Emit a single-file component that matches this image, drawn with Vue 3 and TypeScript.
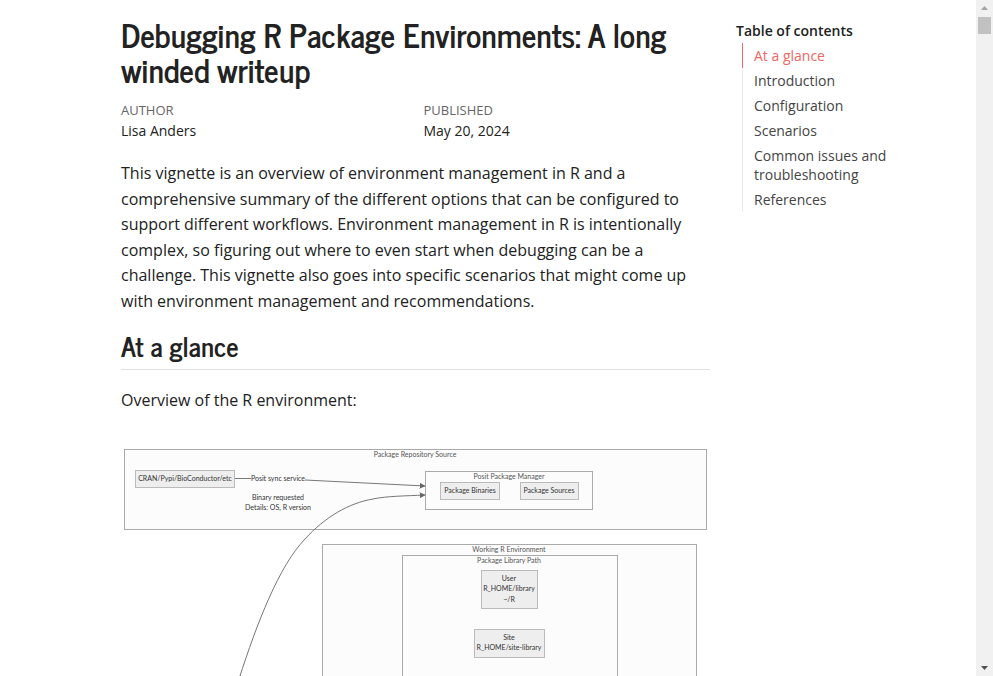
<script setup lang="ts">
interface TocEntry {
  label: string
  target: string
}

interface Box {
  x: number
  y: number
  w: number
  h: number
}

interface Label {
  x: number
  y: number
  text: string
}

const toc: TocEntry[] = [
  { label: 'At a glance', target: '#at-a-glance' },
  { label: 'Introduction', target: '#introduction' },
  { label: 'Configuration', target: '#configuration' },
  { label: 'Scenarios', target: '#scenarios' },
  { label: 'Common issues and troubleshooting', target: '#common-issues' },
  { label: 'References', target: '#references' },
]

const active = '#at-a-glance'

const clusters: Box[] = [
  { x: 3, y: 9, w: 582, h: 80 },
  { x: 304, y: 31, w: 167, h: 38 },
  { x: 201, y: 104, w: 374, h: 300 },
  { x: 281, y: 115, w: 215, h: 240 },
]

const nodes: Box[] = [
  { x: 14, y: 30, w: 99, h: 17 },
  { x: 319, y: 42, w: 59, h: 17 },
  { x: 399, y: 42, w: 58, h: 17 },
  { x: 360, y: 130, w: 56, h: 38 },
  { x: 353, y: 189, w: 70, h: 28 },
]

const clusterLabels: Label[] = [
  { x: 294, y: 17, text: 'Package Repository Source' },
  { x: 388, y: 39, text: 'Posit Package Manager' },
  { x: 388, y: 112, text: 'Working R Environment' },
  { x: 388, y: 123, text: 'Package Library Path' },
]

const nodeLabels: Label[] = [
  { x: 64, y: 41, text: 'CRAN/Pypi/BioConductor/etc' },
  { x: 157, y: 41, text: 'Posit sync service' },
  { x: 157, y: 60, text: 'Binary requested' },
  { x: 157, y: 70, text: 'Details: OS, R version' },
  { x: 349, y: 53, text: 'Package Binaries' },
  { x: 428, y: 53, text: 'Package Sources' },
  { x: 388, y: 141, text: 'User' },
  { x: 388, y: 151, text: 'R_HOME/library' },
  { x: 388, y: 162, text: '~/R' },
  { x: 388, y: 200, text: 'Site' },
  { x: 388, y: 210, text: 'R_HOME/site-library' },
]
</script>

<template>
  <div class="window">
    <div class="page">
      <main class="article">
        <header>
          <h1>Debugging R Package Environments: A long winded writeup</h1>
          <dl class="meta">
            <div>
              <dt>AUTHOR</dt>
              <dd>Lisa Anders</dd>
            </div>
            <div>
              <dt>PUBLISHED</dt>
              <dd>May 20, 2024</dd>
            </div>
          </dl>
        </header>

        <p>
          This vignette is an overview of environment management in R and a comprehensive summary of
          the different options that can be configured to support different workflows. Environment
          management in R is intentionally complex, so figuring out where to even start when
          debugging can be a challenge. This vignette also goes into specific scenarios that might
          come up with environment management and recommendations.
        </p>

        <section id="at-a-glance">
          <h2>At a glance</h2>
          <p>Overview of the R environment:</p>

          <svg class="diagram" viewBox="0 0 589 420" role="img" aria-label="Overview of the R environment">
            <defs>
              <marker
                id="arrow"
                viewBox="0 0 10 10"
                refX="9"
                refY="5"
                markerWidth="6"
                markerHeight="6"
                markerUnits="userSpaceOnUse"
                orient="auto"
              >
                <path d="M0 0 L10 5 L0 10 z" fill="#666" />
              </marker>
            </defs>
            <rect
              v-for="(c, i) in clusters"
              :key="'c' + i"
              class="cluster"
              :x="c.x + 0.5"
              :y="c.y + 0.5"
              :width="c.w"
              :height="c.h"
            />
            <path class="edge" d="M113 38.500 H130" />
            <path class="edge" d="M184 40 L304 46" marker-end="url(#arrow)" />
            <path
              class="edge"
              d="M118 239 C136 183 158 126 184 99 C204 77 228 63 252 59 C266 56 284 56 304 55"
              marker-end="url(#arrow)"
            />
            <rect
              v-for="(n, i) in nodes"
              :key="'n' + i"
              class="node"
              :x="n.x + 0.5"
              :y="n.y + 0.5"
              :width="n.w"
              :height="n.h"
            />
            <text v-for="l in clusterLabels" :key="l.text" class="cluster-label" :x="l.x" :y="l.y">{{ l.text }}</text>
            <text v-for="l in nodeLabels" :key="l.text" class="node-label" :x="l.x" :y="l.y">{{ l.text }}</text>
          </svg>
        </section>
      </main>

      <nav class="toc" aria-labelledby="toc-title">
        <h2 id="toc-title">Table of contents</h2>
        <ul>
          <li v-for="entry in toc" :key="entry.target">
            <a :href="entry.target" :class="{ active: entry.target === active }">{{ entry.label }}</a>
          </li>
        </ul>
      </nav>
    </div>

    <div class="scrollbar" aria-hidden="true">
      <svg viewBox="0 0 17 17"><path d="M5 10 L8.500 6 L12 10 z" fill="#a3a3a3" /></svg>
      <div class="thumb"></div>
      <svg class="down" viewBox="0 0 17 17"><path d="M5 7 H12 L8.500 11 z" fill="#505050" /></svg>
    </div>
  </div>
</template>

<style>
body {
  margin: 0;
  background: #fff;
}
</style>

<style scoped>
.window {
  display: flex;
  height: 100vh;
  overflow: hidden;
  font-family: 'Segoe UI', 'Open Sans', sans-serif;
  font-size: 16px;
  color: #222;
}

.page {
  flex: 1;
  display: grid;
  grid-template-columns: 589fr 160fr;
  column-gap: 26px;
  padding: 17px 80px 0 121px;
  align-items: start;
  overflow: hidden;
}

.article {
  min-width: 0;
}

h1,
.article h2 {
  font-family: 'News Cycle', 'Liberation Sans Narrow', sans-serif;
  font-weight: 700;
}

h1 {
  margin: 0;
  font-size: 32px;
  line-height: 35px;
}

.meta {
  display: grid;
  grid-template-columns: 1fr 1fr;
  column-gap: 16px;
  margin: 13px 0 20px;
  font-size: 14px;
  line-height: 21px;
}

dt {
  font-size: 13px;
  line-height: 20px;
  color: #666;
}

dd {
  margin: 0;
}

p {
  margin: 0;
  line-height: 1.6;
}

.article h2 {
  margin: 14px 0 18px;
  padding-bottom: 8px;
  border-bottom: 1px solid #dee2e6;
  font-size: 27px;
  line-height: 32px;
}

.diagram {
  display: block;
  width: 100%;
  margin-top: 27px;
}

.cluster {
  fill: #fcfcfc;
  stroke: #aaa;
}

.node {
  fill: #eee;
  stroke: #bbb;
}

.edge {
  fill: none;
  stroke: #777;
}

.cluster-label,
.node-label {
  font-family: 'Trebuchet MS', Lato, sans-serif;
  font-size: 7px;
  text-anchor: middle;
  fill: #333;
}

.cluster-label {
  fill: #555;
}

.toc {
  padding-top: 4px;
  font-size: 14px;
}

.toc h2 {
  margin: 0;
  font-size: 14px;
  font-weight: 600;
  line-height: 20px;
}

.toc ul {
  margin: 2px 0 0 6px;
  padding: 0;
  list-style: none;
}

.toc a {
  display: block;
  padding: 3px 0 3px 11px;
  border-left: 1px solid #ebebeb;
  line-height: 19px;
  color: #444;
  text-decoration: none;
}

.toc a.active {
  border-left-color: #eb6864;
  color: #eb6864;
}

.scrollbar {
  display: flex;
  flex-direction: column;
  width: 17px;
  background: #f1f1f1;
}

.scrollbar svg {
  width: 17px;
  height: 17px;
}

.thumb {
  height: 17px;
  margin: 0 2px;
  background: #c1c1c1;
}

.scrollbar .down {
  margin-top: auto;
}
</style>
